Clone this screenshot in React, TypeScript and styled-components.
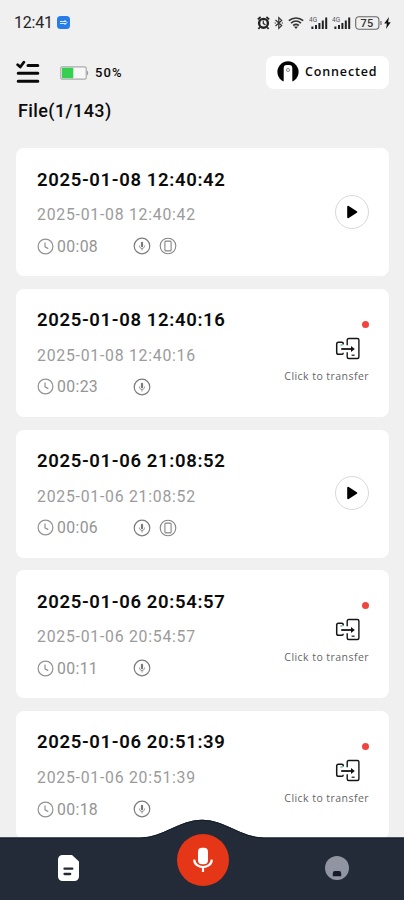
import React from "react";
import styled, { createGlobalStyle } from "styled-components";

const GlobalStyle = createGlobalStyle`
  * { box-sizing: border-box; }
  body { margin: 0; background: #f0f0f0; }
`;

const Screen = styled.div`
  position: relative;
  display: flex;
  flex-direction: column;
  width: 404px;
  height: 900px;
  overflow: hidden;
  background: #f0f0f0;
  color: #0b0b0b;
  font-family: Roboto, "Noto Sans", sans-serif;
  white-space: nowrap;
`;

const StatusBar = styled.div`
  display: flex;
  align-items: center;
  justify-content: space-between;
  height: 45px;
  padding: 0 12px 0 14px;
  flex-shrink: 0;
`;

const Clock = styled.div`
  display: flex;
  align-items: center;
  gap: 4px;
  font-size: 16px;
  line-height: 20px;
  letter-spacing: -0.2px;
  color: #252525;
`;

const StatusIcons = styled.div`
  display: flex;
  align-items: center;
  gap: 4.2px;
`;

const Toolbar = styled.div`
  display: flex;
  align-items: center;
  height: 54px;
  padding: 0 15px 0 16px;
  flex-shrink: 0;
`;

const BatteryLevel = styled.div`
  display: flex;
  align-items: center;
  flex: 1;
  gap: 6px;
  margin: 1px 0 0 20px;
  font: 500 13px/18px Roboto, sans-serif;
  letter-spacing: 1.1px;
`;

const ConnectedPill = styled.div`
  display: flex;
  align-items: center;
  gap: 6px;
  width: 123px;
  height: 33px;
  padding-left: 11px;
  border-radius: 8px;
  background: #fff;
  font: 600 12.5px/18px "Open Sans", sans-serif;
  letter-spacing: 0.85px;
`;

const FileCount = styled.h1`
  margin: 0;
  height: 49.3px;
  padding-left: 18px;
  flex-shrink: 0;
  font-size: 18px;
  line-height: 24px;
  font-weight: 500;
  letter-spacing: 0.4px;
`;

const List = styled.main`
  display: flex;
  flex-direction: column;
  gap: 12.7px;
  padding: 0 15px 0 16px;
`;

const Card = styled.article`
  display: flex;
  justify-content: space-between;
  height: 128px;
  padding: 18px 20px 0 21px;
  flex-shrink: 0;
  border-radius: 8px;
  background: #fff;
`;

const Details = styled.div`
  display: flex;
  flex-direction: column;
  padding-top: 0.4px;
`;

const Title = styled.h2`
  margin: 0;
  font-size: 18.5px;
  line-height: 26px;
  font-weight: 600;
  letter-spacing: 0.65px;
`;

const Subtitle = styled.div`
  margin-top: 12.6px;
  font-size: 15.8px;
  line-height: 20px;
  letter-spacing: 0.75px;
  color: #9b9b9b;
`;

const Meta = styled.div`
  display: flex;
  align-items: center;
  height: 20px;
  margin-top: 11px;
  font-size: 15.8px;
  letter-spacing: 0.35px;
  color: #949494;
`;

const Duration = styled.span`
  width: 76px;
  margin-left: 3px;
`;

const MetaIcons = styled.div`
  display: flex;
  gap: 8px;
`;

const PlayButton = styled.button`
  display: flex;
  align-items: center;
  justify-content: center;
  width: 34px;
  height: 34px;
  margin-top: 28.5px;
  padding: 0;
  border: 1.4px solid #d9d9d9;
  border-radius: 50%;
  background: #fff;
`;

const Transfer = styled.div`
  display: flex;
  flex-direction: column;
  align-items: flex-end;
  padding-top: 14px;
  font: 400 10.5px/14px "Open Sans", sans-serif;
  letter-spacing: 0.45px;
  color: #666;

  svg { margin: 9px 8px 9px 0; }
`;

const UnreadDot = styled.span`
  width: 7px;
  height: 7px;
  border-radius: 50%;
  background: #ee453f;
`;

const BottomNav = styled.nav`
  position: absolute;
  left: 0;
  bottom: 0;
  width: 404px;
  height: 82px;
`;

const NavShape = styled.svg`
  position: absolute;
  left: 0;
  top: 0;
`;

const NavItems = styled.div`
  position: relative;
  display: grid;
  grid-template-columns: 136px 133px 135px;
  justify-items: center;
  align-items: center;
  height: 82px;
`;

const NavItem = styled.div<{ $drop?: number }>`
  display: flex;
  padding-top: ${(p) => p.$drop ?? 0}px;
`;

const RecordButton = styled.button`
  display: flex;
  align-items: center;
  justify-content: center;
  width: 52px;
  height: 52px;
  margin-top: 1px;
  padding: 0;
  border: 0;
  border-radius: 50%;
  background: #e53618;
`;

const LinkBadge = () => (
  <svg width="13" height="13" viewBox="0 0 13 13">
    <rect width="13" height="13" rx="3.5" fill="#287ce8" />
    <path d="M3 5.5h6M3 7.5h6M7.5 4l2.5 2.5L7.5 9" stroke="#d8eaff" strokeWidth="1" fill="none" />
  </svg>
);

const AlarmIcon = () => (
  <svg width="13" height="14" viewBox="0 0 13 14" fill="none" stroke="#222">
    <path d="M.8 3.4 3.6 1M12.2 3.4 9.4 1M2.8 11.3 1.4 13M10.2 11.3l1.4 1.7" strokeWidth="1.7" />
    <circle cx="6.5" cy="7.3" r="4.4" strokeWidth="2.4" />
    <path d="M6.3 4.6v3l2.2 1.2" strokeWidth="1.1" />
  </svg>
);

const BluetoothIcon = () => (
  <svg width="10" height="14" viewBox="0 0 10 14" fill="none" stroke="#333" strokeWidth="1.2">
    <path d="m1.5 4 6.2 5.6L4.8 12.4V1.6l2.9 2.8L1.5 10" />
    <path d="M.6 7h1.2M7.8 7H9" />
  </svg>
);

const WifiIcon = () => (
  <svg width="16" height="14" viewBox="0 0 16 14" fill="none" stroke="#333">
    <path d="M.8 4.7C5 1 11 1 15.2 4.7M3 7.2c3-2.6 7-2.6 10 0M5.2 9.5c1.8-1.4 3.8-1.4 5.6 0" strokeWidth="1.6" />
    <path d="M6 10.6h4L8 13z" fill="#333" stroke="none" />
  </svg>
);

const SignalIcon = () => (
  <svg width="19" height="14" viewBox="0 0 19 14" fill="#222">
    <text x="0" y="6.3" fontFamily="Roboto" fontSize="6.5" fill="#555">4G</text>
    <rect x="2.4" y="10.5" width="2" height="2.5" />
    <rect x="6" y="9" width="2" height="4" />
    <rect x="9.4" y="7" width="2" height="6" />
    <rect x="12.8" y="4.5" width="2" height="8.5" />
    <rect x="16.2" y="1.5" width="2" height="11.5" />
  </svg>
);

const PhoneBatteryIcon = () => (
  <svg width="37" height="14" viewBox="0 0 37 14">
    <rect x=".7" y=".8" width="23.2" height="12.4" rx="3.2" fill="none" stroke="#666" strokeWidth="1.1" />
    <path d="M26 5v4" stroke="#777" strokeWidth="1.3" />
    <text x="5.6" y="11" fontFamily="Roboto" fontSize="11" fontWeight="500" letterSpacing=".2" fill="#333">75</text>
    <path d="m34 1-4.8 6.6h2.7L31 13l4.7-6.8h-2.6z" fill="#111" />
  </svg>
);

const ChecklistIcon = () => (
  <svg width="24" height="24" viewBox="0 0 24 24" fill="none" stroke="#090909" strokeWidth="3" strokeLinecap="round" strokeLinejoin="round">
    <path d="M12 5.6h9.8M2.2 13.2h19.6M2.2 21.3h19.6" />
    <path d="m1.7 4.7 2.6 2.3 3.5-4.8" strokeWidth="2.8" />
  </svg>
);

const DeviceBatteryIcon = () => (
  <svg width="29" height="14" viewBox="0 0 29 14">
    <rect x=".8" y=".8" width="25.4" height="12.4" rx="1.5" fill="#f7f7f7" stroke="#aaa" strokeWidth="1.2" />
    <rect x="2" y="1.8" width="11.3" height="10.5" rx=".8" fill="#36cf50" />
    <path d="M27 4.7c1.5.3 1.5 4.3 0 4.6z" fill="#999" />
  </svg>
);

const DeviceIcon = () => (
  <svg width="22" height="22" viewBox="0 0 22 22">
    <path d="M6 20.2A10.6 10.6 0 1 1 16 20.2z" fill="#050505" />
    <path d="M6.7 22V7.2Q6.7 4 9.7 4h2.6q3 0 3 3.2V22z" fill="#fff" />
    <circle cx="11" cy="9" r="1.6" fill="#eee" stroke="#888" strokeWidth=".9" />
  </svg>
);

const ClockIcon = () => (
  <svg width="17" height="17" viewBox="0 0 17 17" fill="none" stroke="#929292" strokeWidth="1.2">
    <circle cx="8.5" cy="8.5" r="7.4" />
    <path d="M8 4.6v4.3l3.3 1.7" />
  </svg>
);

const MicBadge = () => (
  <svg width="18" height="18" viewBox="0 0 18 18" fill="none" stroke="#7c7c7c" strokeWidth="1.2">
    <circle cx="9" cy="9" r="7.8" />
    <rect x="7.9" y="4.7" width="2.2" height="5.6" rx="1.1" fill="#777" stroke="none" />
    <path d="M6.4 8.5c0 4 5.2 4 5.2 0M9 11.5v2" strokeWidth=".8" />
  </svg>
);

const PhoneBadge = () => (
  <svg width="18" height="18" viewBox="0 0 18 18" fill="none" stroke="#858585" strokeWidth="1.1">
    <circle cx="9" cy="9" r="7.8" />
    <rect x="5.9" y="4.1" width="6.2" height="9.8" rx="1" />
  </svg>
);

const PlayIcon = () => (
  <svg width="12" height="14" viewBox="0 0 12 14">
    <path d="M2.2 1.8v10.4L10.3 7z" fill="#000" stroke="#000" strokeWidth="2" strokeLinejoin="round" />
  </svg>
);

const TransferIcon = () => (
  <svg width="26" height="23" viewBox="0 0 26 23" fill="none" stroke="#151515" strokeWidth="1.5">
    <path d="M8.2 7.6V6.4Q8.2 5.2 7 5.2H3.4Q1.7 5.2 1.7 7v8.5q0 1.8 1.7 1.8H7q1.2 0 1.2-1.6" />
    <path d="M12.2 8.2V3Q12.2 1.5 13.7 1.5h8.7q1.5 0 1.5 1.5v17q0 1.5-1.5 1.5h-8.7q-1.5 0-1.5-1.5v-4.7" strokeWidth="1.4" />
    <path d="M6.2 12h11" strokeWidth="1.8" />
    <path d="m16 8.9 3.8 3.1-3.8 3.1z" fill="#111" stroke="none" />
    <path d="M16.6 18.2h3" strokeWidth="1.2" />
    <path d="M5.5 8h2" stroke="#52c994" />
  </svg>
);

const FilesIcon = () => (
  <svg width="21" height="26" viewBox="0 0 21 26">
    <path d="M4.5 0H14l7 6.5v15a4.5 4.5 0 0 1-4.5 4.5h-12A4.5 4.5 0 0 1 0 21.5v-17A4.5 4.5 0 0 1 4.5 0z" fill="#fff" />
    <path d="M6.5 13.7h7.8M6.5 19h5.7" stroke="#202936" strokeWidth="2.3" strokeLinecap="round" />
  </svg>
);

const MicIcon = () => (
  <svg width="22" height="28" viewBox="0 0 22 28" fill="none" stroke="#fff" strokeWidth="2.2">
    <rect x="6" y="1.8" width="10" height="16.5" rx="4" fill="#fff" stroke="none" />
    <path d="M2.2 13.6c.4 10 17.2 10 17.6 0M11 21v5" />
  </svg>
);

const ProfileIcon = () => (
  <svg width="24" height="24" viewBox="0 0 24 24">
    <circle cx="12" cy="12" r="12" fill="#9195a1" />
    <path d="M7.8 20.2v-2.7q0-2.4 2.2-2.4h4q2.2 0 2.2 2.4v2.7z" fill="#151b27" />
  </svg>
);

interface Recording {
  time: string;
  duration: string;
  onPhone: boolean;
}

const recordings: Recording[] = [
  { time: "2025-01-08 12:40:42", duration: "00:08", onPhone: true },
  { time: "2025-01-08 12:40:16", duration: "00:23", onPhone: false },
  { time: "2025-01-06 21:08:52", duration: "00:06", onPhone: true },
  { time: "2025-01-06 20:54:57", duration: "00:11", onPhone: false },
  { time: "2025-01-06 20:51:39", duration: "00:18", onPhone: false },
];

const RecordingCard = ({ time, duration, onPhone }: Recording) => (
  <Card>
    <Details>
      <Title>{time}</Title>
      <Subtitle>{time}</Subtitle>
      <Meta>
        <ClockIcon />
        <Duration>{duration}</Duration>
        <MetaIcons>
          <MicBadge />
          {onPhone && <PhoneBadge />}
        </MetaIcons>
      </Meta>
    </Details>
    {onPhone ? (
      <PlayButton aria-label="Play"><PlayIcon /></PlayButton>
    ) : (
      <Transfer>
        <UnreadDot />
        <TransferIcon />
        <span>Click to transfer</span>
      </Transfer>
    )}
  </Card>
);

export default function App() {
  return (
    <Screen>
      <GlobalStyle />
      <StatusBar>
        <Clock>12:41 <LinkBadge /></Clock>
        <StatusIcons>
          <AlarmIcon />
          <BluetoothIcon />
          <WifiIcon />
          <SignalIcon />
          <SignalIcon />
          <PhoneBatteryIcon />
        </StatusIcons>
      </StatusBar>
      <Toolbar>
        <ChecklistIcon />
        <BatteryLevel><DeviceBatteryIcon />50%</BatteryLevel>
        <ConnectedPill><DeviceIcon />Connected</ConnectedPill>
      </Toolbar>
      <FileCount>File(1/143)</FileCount>
      <List>
        {recordings.map((r) => <RecordingCard key={r.time} {...r} />)}
      </List>
      <BottomNav>
        <NavShape width="404" height="82" viewBox="0 0 404 82">
          <path d="M0 19.5H140C163 19.5 179 1.7 202 1.7S241 19.5 264 19.5H404V82H0z" fill="#222b37" />
          <path d="M0 20H140C163 20 179 2.2 202 2.2S241 20 264 20H404" fill="none" stroke="#111c28" strokeWidth="1" />
        </NavShape>
        <NavItems>
          <NavItem $drop={17}><FilesIcon /></NavItem>
          <RecordButton aria-label="Record"><MicIcon /></RecordButton>
          <NavItem $drop={17}><ProfileIcon /></NavItem>
        </NavItems>
      </BottomNav>
    </Screen>
  );
}
